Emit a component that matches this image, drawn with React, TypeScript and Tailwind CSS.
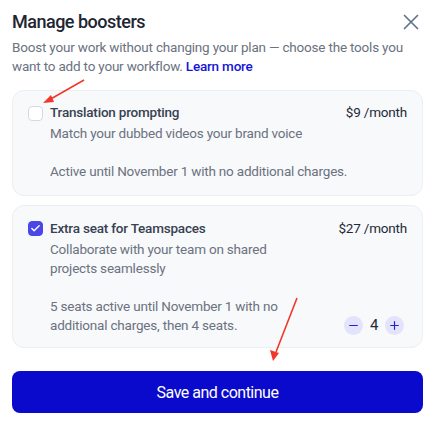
import React, { useState } from 'react';
import { X, Minus, Plus, Check } from 'lucide-react';

export default function App() {
  const [seats, setSeats] = useState(4);
  const [translation, setTranslation] = useState(false);
  const [extra, setExtra] = useState(true);

  return (
    <div
      className="relative h-[425px] w-[435px] bg-white px-3 pt-[9px] text-[13.5px] leading-[19px] tracking-[-0.2px]"
      style={{ fontFamily: 'Roboto, "Noto Sans", sans-serif' }}
    >
      <div className="flex items-center justify-between">
        <h2 className="text-[18px] font-medium leading-[24px] tracking-[-0.5px] text-[#1e2533]">Manage boosters</h2>
        <button className="-mr-[1px] text-[#64748b]">
          <X size={26} strokeWidth={1.6} />
        </button>
      </div>
      <p className="mt-[3px] text-[#6b7280]">
        Boost your work without changing your plan — choose the tools you want to add to your workflow.{' '}
        <a className="font-medium text-[#1515d8]">Learn more</a>
      </p>

      <div className="mt-[14px] flex flex-col gap-[9px]">
        <div className="rounded-xl border border-[#eceef2] bg-[#f8f9fb] px-[15px] pb-[14px] pt-[12px]">
          <div className="flex items-start gap-[7px]">
            <button
              onClick={() => setTranslation(!translation)}
              className={`mt-[3px] grid h-[15px] w-[15px] shrink-0 place-items-center rounded-[4px] border ${
                translation ? 'border-[#4a46e8] bg-[#4a46e8] text-white' : 'border-[#d6d9df] bg-white'
              }`}
            >
              {translation && <Check size={11} strokeWidth={3} />}
            </button>
            <div className="flex-1">
              <div className="flex justify-between">
                <span className="font-medium text-[#374151]">Translation prompting</span>
                <span className="text-[#1f2937]">$9 /month</span>
              </div>
              <p className="mt-[2px] text-[#6b7280]">Match your dubbed videos your brand voice</p>
              <p className="mt-[19px] text-[#6b7280]">Active until November 1 with no additional charges.</p>
            </div>
          </div>
        </div>

        <div className="rounded-xl border border-[#eceef2] bg-[#f8f9fb] px-[15px] pb-[12px] pt-[13px]">
          <div className="flex items-start gap-[7px]">
            <button
              onClick={() => setExtra(!extra)}
              className={`mt-[2px] grid h-[15px] w-[15px] shrink-0 place-items-center rounded-[4px] border ${
                extra ? 'border-[#4a46e8] bg-[#4a46e8] text-white' : 'border-[#d6d9df] bg-white'
              }`}
            >
              {extra && <Check size={11} strokeWidth={3} />}
            </button>
            <div className="flex-1">
              <div className="flex justify-between">
                <span className="font-medium text-[#374151]">Extra seat for Teamspaces</span>
                <span className="text-[#1f2937]">$27 /month</span>
              </div>
              <p className="mt-[2px] w-[234px] text-[#6b7280]">Collaborate with your team on shared projects seamlessly</p>
              <div className="mt-[19px] flex items-end justify-between">
                <p className="w-[234px] text-[#6b7280]">
                  5 seats active until November 1 with no additional charges, then 4 seats.
                </p>
                <div className="mr-[3px] flex items-center gap-[6px]">
                  <button
                    onClick={() => setSeats(Math.max(0, seats - 1))}
                    className="grid h-[19px] w-[19px] place-items-center rounded-full bg-[#e3e3fb] text-[#2424cf]"
                  >
                    <Minus size={13} strokeWidth={2.2} />
                  </button>
                  <span className="w-[10px] text-center text-[15px] text-[#1f2937]">{seats}</span>
                  <button
                    onClick={() => setSeats(seats + 1)}
                    className="grid h-[19px] w-[19px] place-items-center rounded-full bg-[#e3e3fb] text-[#2424cf]"
                  >
                    <Plus size={13} strokeWidth={2.2} />
                  </button>
                </div>
              </div>
            </div>
          </div>
        </div>
      </div>

      <button className="mt-[23px] flex h-[42px] w-full items-center justify-center rounded-lg bg-[#0a0acc] text-[16px] tracking-[-0.5px] text-white">
        Save and continue
      </button>

      {/* annotation arrows */}
      <svg className="pointer-events-none absolute left-0 top-0" width="435" height="425">
        <g stroke="#f2362a" strokeWidth="1.6" fill="#f2362a">
          <line x1="84" y1="80" x2="49" y2="100" />
          <polygon points="43,103 51,95 54,102" stroke="none" />
          <line x1="297" y1="298" x2="276" y2="352" />
          <polygon points="273,361 270,350 279,353" stroke="none" />
        </g>
      </svg>
    </div>
  );
}
